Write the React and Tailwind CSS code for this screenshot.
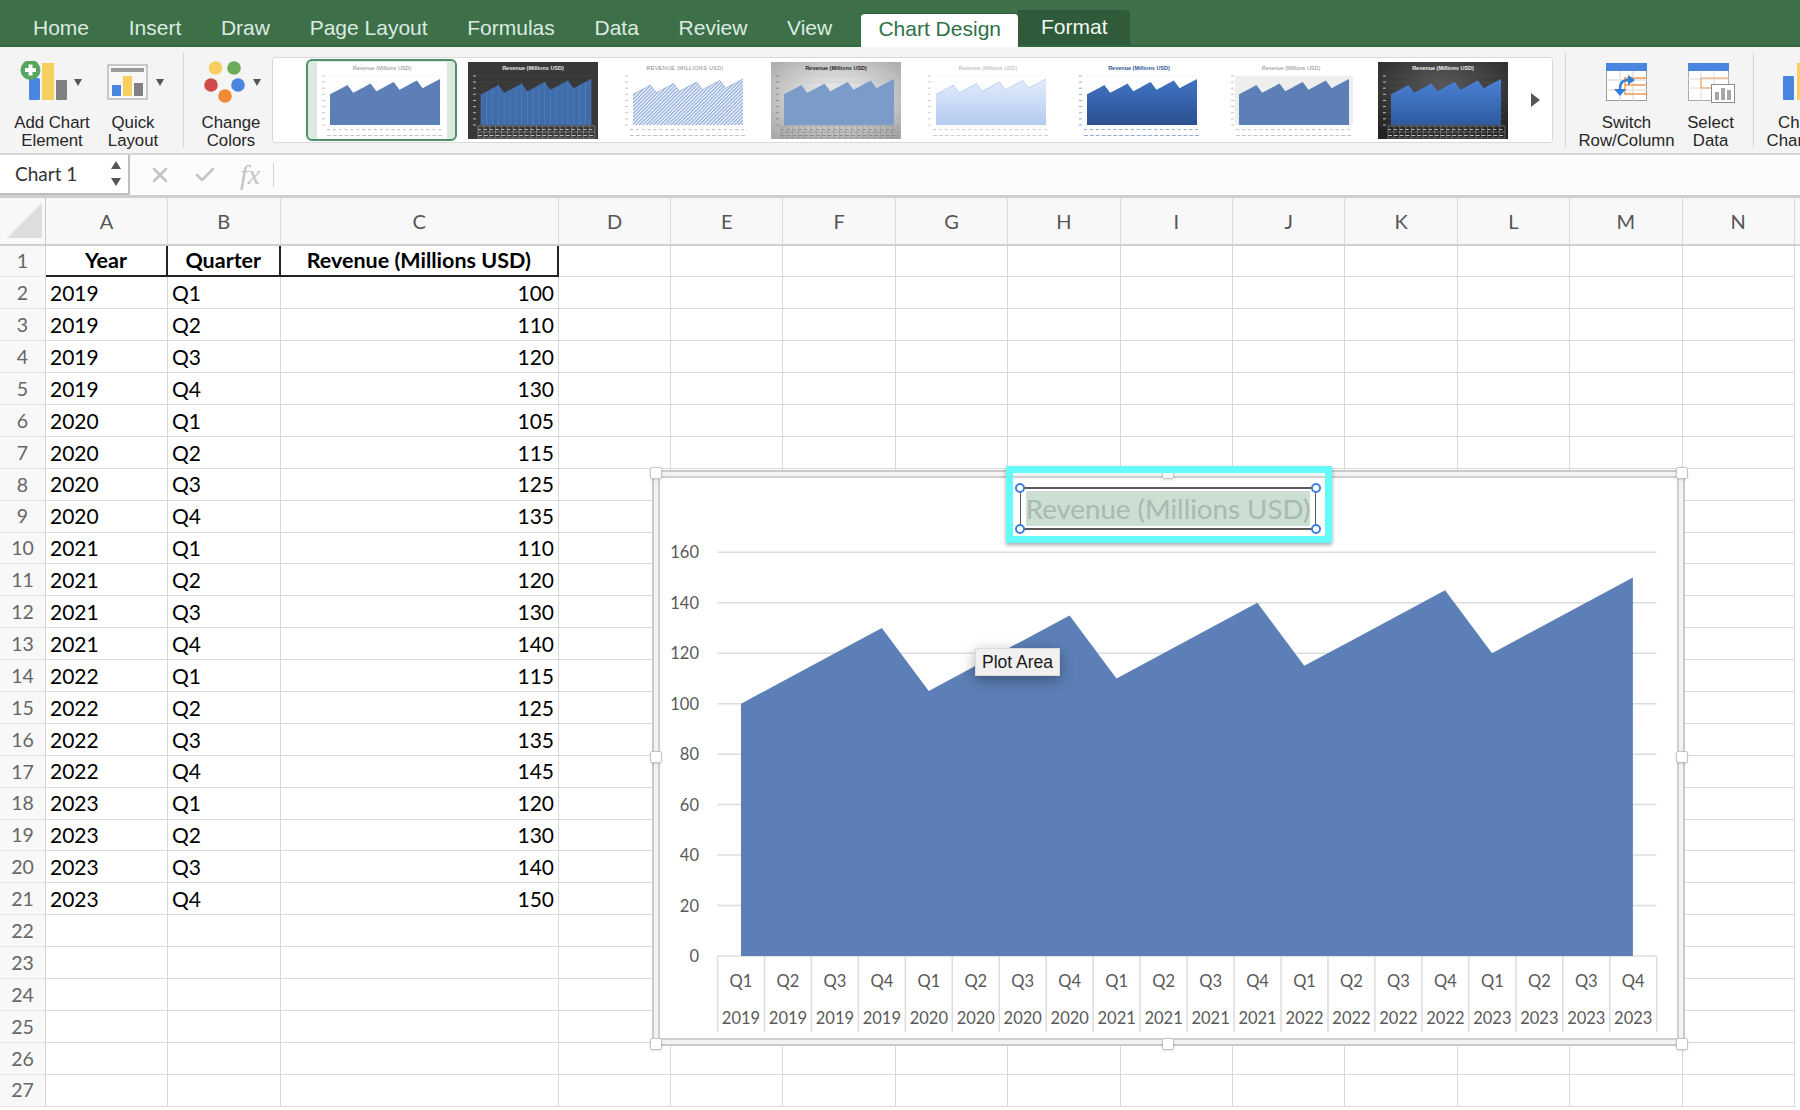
import { useId } from "react";
import { X, Check } from "lucide-react";

const values = [100, 110, 120, 130, 105, 115, 125, 135, 110, 120, 130, 140, 115, 125, 135, 145, 120, 130, 140, 150];
const quarters = ["Q1", "Q2", "Q3", "Q4"];
const years = [2019, 2020, 2021, 2022, 2023];

const rows = values.map((v, i) => ({
  year: years[Math.floor(i / 4)],
  quarter: quarters[i % 4],
  value: v,
}));

const letters = ["A", "B", "C", "D", "E", "F", "G", "H", "I", "J", "K", "L", "M", "N"];
const widths = [
  "w-[122px]", "w-[112.5px]", "w-[278.5px]", "w-[112px]", "w-[112.4px]", "w-[112.4px]", "w-[112.4px]",
  "w-[112.4px]", "w-[112.4px]", "w-[112.4px]", "w-[112.4px]", "w-[112.4px]", "w-[112.4px]", "w-[112.4px]",
];

function Tab({ children }) {
  return <span className="text-[#dcebe0]">{children}</span>;
}

function Caret({ className }) {
  return <span className={"absolute w-0 h-0 border-x-[4px] border-x-transparent border-t-[7px] border-t-[#555] " + className} />;
}

function RibbonBtn({ icon, label, label2, className }) {
  return (
    <div className={"relative flex flex-col items-center pt-[14px] shrink-0 " + className}>
      <div className="h-[53px] w-full">{icon}</div>
      <div className="text-center text-[16.8px] leading-[18px] text-[#262626] whitespace-nowrap">
        <div>{label}</div>
        <div>{label2}</div>
      </div>
    </div>
  );
}

function AddChartIcon() {
  return (
    <svg viewBox="10 61 84 52" width="84" height="52">
      <rect x="29" y="78" width="11" height="22" rx="1.5" fill="#4a86e0" />
      <rect x="42" y="63" width="12" height="37" fill="#f6cf5f" />
      <rect x="56" y="80" width="11" height="20" rx="1" fill="#808080" />
      <circle cx="30.5" cy="70" r="10" fill="#58a55f" />
      <path d="M28.500 64.500h4v3.500h3.500v4h-3.500v3.500h-4v-3.500h-3.500v-4h3.500z" fill="#fff" />
    </svg>
  );
}

function QuickLayoutIcon() {
  return (
    <svg viewBox="94 61 78 52" width="78" height="52">
      <rect x="108" y="65" width="39" height="34" fill="#f7f7f7" stroke="#9a9a9a" />
      <rect x="111" y="68" width="33" height="4" fill="#9b9b9b" />
      <rect x="112" y="85" width="9" height="11" fill="#4a86e0" />
      <rect x="123" y="76" width="9" height="20" fill="#f6cf5f" />
      <rect x="134" y="83" width="9" height="13" fill="#808080" />
    </svg>
  );
}

function ColorsIcon() {
  return (
    <svg viewBox="190 61 82 52" width="82" height="52">
      <circle cx="215.500" cy="68" r="6.800" fill="#f6cf5f" />
      <circle cx="234" cy="68" r="6.800" fill="#6cab5c" />
      <circle cx="211" cy="85" r="6.800" fill="#d14b4b" />
      <circle cx="238" cy="85" r="6.800" fill="#4a86e0" />
      <circle cx="225" cy="96" r="6.800" fill="#ef8b34" />
    </svg>
  );
}

function SwitchIcon() {
  return (
    <svg viewBox="1572 61 110 52" width="110" height="52">
      <rect x="1606.500" y="63.500" width="40" height="37" fill="#fff" stroke="#999" />
      <rect x="1606" y="63" width="41" height="8" fill="#4a86e0" />
      <path d="M1606 80h41M1606 90h41M1620 71v30M1633 71v30" stroke="#d4d4d4" fill="none" />
      <path d="M1624 78h23M1624 85h23M1624 94h23M1625 78v16" stroke="#ef9b55" fill="none" strokeWidth="1.300" />
      <path d="M1620 90c0-7 2-10 9-10" stroke="#2f7fd8" strokeWidth="2.500" fill="none" />
      <path d="M1628 75l7 5-7 5z M1614 89h12l-6 7z" fill="#2f7fd8" />
    </svg>
  );
}

function SelectIcon() {
  return (
    <svg viewBox="1682 61 58 52" width="58" height="52">
      <rect x="1688.500" y="63.500" width="40" height="37" fill="#fff" stroke="#aaa" />
      <rect x="1688" y="63" width="41" height="8" fill="#4a86e0" />
      <path d="M1688 79h41M1688 88h41M1701 71v30M1714 71v30" stroke="#dcdcdc" fill="none" />
      <path d="M1701 78h28M1701 88h12M1701 78v10" stroke="#ef9b55" fill="none" />
      <rect x="1711.500" y="84.500" width="23" height="18" fill="#fff" stroke="#8c8c8c" />
      <rect x="1715" y="92" width="4" height="8" fill="#a6a6a6" />
      <rect x="1721" y="88" width="4" height="12" fill="#a6a6a6" />
      <rect x="1727" y="90" width="4" height="10" fill="#a6a6a6" />
    </svg>
  );
}

function ChartTypeIcon() {
  return (
    <svg viewBox="1764 61 90 52" width="90" height="52">
      <rect x="1784" y="76" width="11" height="24" rx="1" fill="#4a86e0" />
      <rect x="1798" y="63" width="12" height="37" fill="#f6cf5f" />
    </svg>
  );
}

const thumbPoints = values.map((v, i) => `${13 + i * 5.79},${63 - v * 0.307}`).join(" ");
const thumbArea = `13,63 ${thumbPoints} ${13 + 19 * 5.79},63`;

const themes = {
  plain: { bg: "#ffffff", fill: "#5b7fb6", title: "#8a8a8a", tick: "#c4c4c4", grid: "#f0f0f0" },
  dark: { bg: "#383838", fill: "#3f6cab", title: "#e6e6e6", weight: 700, tick: "#bdbdbd", grid: "#4a4a4a", cells: "#cfcfcf", bars: true },
  hatch: { bg: "#ffffff", fill: "hatch", title: "#8a8a8a", tick: "#c4c4c4", grid: "#ffffff", upper: true, line: "#7d9fd4" },
  gray: { bg: "gray", fill: "#7b9cc9", title: "#262626", weight: 700, tick: "#8c8c8c", grid: "#c4c4c4", cells: "#7a7a7a" },
  soft: { bg: "#ffffff", fill: "soft", title: "#b0b0b0", tick: "#cfcfcf", grid: "#f2f2f2", line: "#a5bde8" },
  navy: { bg: "#ffffff", fill: "navy", title: "#2f5597", weight: 700, tick: "#8fadd9", grid: "#f2f2f2" },
  tint: { bg: "#ffffff", fill: "#5b7fb6", title: "#8a8a8a", tick: "#c4c4c4", grid: "#f0f0f0", plot: "#eeeeee" },
  night: { bg: "night", fill: "deep", title: "#f0f0f0", weight: 700, tick: "#bdbdbd", grid: "#555", cells: "#bdbdbd" },
};

function Thumb({ theme, className }) {
  const id = useId().replace(/:/g, "");
  const t = themes[theme];
  const fills = { hatch: `url(#h${id})`, soft: `url(#s${id})`, navy: `url(#n${id})`, deep: `url(#d${id})` };
  const bg = t.bg === "gray" ? `url(#g${id})` : t.bg === "night" ? `url(#r${id})` : t.bg;
  return (
    <svg viewBox="0 0 130 77" width="130" height="77" className={"shrink-0 " + (className || "")}>
      <defs>
        <pattern id={`h${id}`} width="2.500" height="2.500" patternUnits="userSpaceOnUse" patternTransform="rotate(45)">
          <rect width="2.500" height="2.500" fill="#ffffff" />
          <rect width="1.300" height="2.500" fill="#8aa8d8" />
        </pattern>
        <linearGradient id={`s${id}`} x1="0" y1="0" x2="0" y2="1">
          <stop offset="0" stopColor="#e3ecfb" />
          <stop offset="1" stopColor="#b4caf1" />
        </linearGradient>
        <linearGradient id={`n${id}`} x1="0" y1="0" x2="0" y2="1">
          <stop offset="0" stopColor="#4274c4" />
          <stop offset="1" stopColor="#2a508f" />
        </linearGradient>
        <linearGradient id={`d${id}`} x1="0" y1="0" x2="0" y2="1">
          <stop offset="0" stopColor="#4a82d8" />
          <stop offset="1" stopColor="#2f5a9e" />
        </linearGradient>
        <radialGradient id={`g${id}`} cx="0.500" cy="0.450" r="0.700">
          <stop offset="0" stopColor="#f5f5f5" />
          <stop offset="1" stopColor="#a8a8a8" />
        </radialGradient>
        <radialGradient id={`r${id}`} cx="0.500" cy="0.300" r="0.750">
          <stop offset="0" stopColor="#595959" />
          <stop offset="1" stopColor="#232323" />
        </radialGradient>
      </defs>
      <rect width="130" height="77" fill={bg} />
      {t.plot && <rect x="9" y="14" width="118" height="49" fill={t.plot} />}
      <text x="65" y="8" textAnchor="middle" fontSize="5.500" fontWeight={t.weight || 400} fill={t.title} fontFamily="'Liberation Sans', sans-serif" letterSpacing={t.upper ? "0.3" : "0"}>
        {t.upper ? "REVENUE (MILLIONS USD)" : "Revenue (Millions USD)"}
      </text>
      {[0, 1, 2, 3, 4, 5, 6, 7, 8].map((n) => (
        <g key={n}>
          <line x1="11" x2="126" y1={63 - n * 6.140} y2={63 - n * 6.140} stroke={t.grid} strokeWidth="0.500" />
          <line x1="5" x2="8" y1={63 - n * 6.140} y2={63 - n * 6.140} stroke={t.tick} strokeWidth="1" />
        </g>
      ))}
      <polygon points={thumbArea} fill={fills[t.fill] || t.fill} />
      {t.line && <polyline points={thumbPoints} fill="none" stroke={t.line} strokeWidth="0.600" />}
      {t.bars && values.map((v, i) => (
        <line key={i} x1={13 + i * 5.79} x2={13 + i * 5.79} y1={63 - v * 0.307} y2="63" stroke="#6d90c6" strokeWidth="0.400" />
      ))}
      {t.cells && (
        <g stroke={t.cells} strokeWidth="0.400" fill="none">
          <path d="M10 64h117M10 70h117M10 76h117" />
          {values.map((v, i) => (
            <line key={i} x1={10 + i * 5.85} x2={10 + i * 5.85} y1="64" y2="76" />
          ))}
          <line x1="127" x2="127" y1="64" y2="76" />
        </g>
      )}
      <line x1="10" x2="127" y1="67.500" y2="67.500" stroke={t.tick} strokeWidth="1.200" strokeDasharray="3 2.850" />
      <line x1="10" x2="127" y1="73.500" y2="73.500" stroke={t.tick} strokeWidth="1" strokeDasharray="4 1.850" />
    </svg>
  );
}

function Gallery() {
  return (
    <div className="flex items-center w-[1280.5px] h-[86px] mt-[10px] shrink-0 bg-white border border-[#d9d9d9] rounded-[3px]">
      <div className="ml-[33px] w-[151px] h-[82px] shrink-0 rounded-[6px] border-2 border-[#4f9068] bg-[#dbe9df] flex justify-center items-center">
        <Thumb theme="plain" />
      </div>
      <div className="flex gap-[21.6px] ml-[11px]">
        <Thumb theme="dark" />
        <Thumb theme="hatch" />
        <Thumb theme="gray" />
        <Thumb theme="soft" />
        <Thumb theme="navy" />
        <Thumb theme="tint" />
        <Thumb theme="night" />
      </div>
      <span className="ml-[23px] w-0 h-0 border-y-[7px] border-y-transparent border-l-[9px] border-l-[#555]" />
    </div>
  );
}

function Sep({ className }) {
  return <div className={"w-px h-[94px] mt-[6px] bg-[#d4d4d4] shrink-0 " + className} />;
}

function Ribbon() {
  return (
    <div className="flex h-[106px] bg-[#f4f4f4] shrink-0 overflow-hidden">
      <RibbonBtn className="w-[84px] ml-[10px]" icon={<AddChartIcon />} label="Add Chart" label2="Element" />
      <Caret className="left-[74px] top-[79px]" />
      <RibbonBtn className="w-[78px]" icon={<QuickLayoutIcon />} label="Quick" label2="Layout" />
      <Caret className="left-[156px] top-[79px]" />
      <Sep className="ml-[11px]" />
      <RibbonBtn className="w-[88px] pl-[6px]" icon={<ColorsIcon />} label="Change" label2="Colors" />
      <Caret className="left-[253px] top-[79px]" />
      <Gallery />
      <Sep className="ml-[12px]" />
      <RibbonBtn className="w-[110px] ml-[6px]" icon={<SwitchIcon />} label="Switch" label2="Row/Column" />
      <RibbonBtn className="w-[58px]" icon={<SelectIcon />} label="Select" label2="Data" />
      <Sep className="ml-[13px]" />
      <RibbonBtn className="w-[90px] ml-[9px]" icon={<ChartTypeIcon />} label="Change" label2="Chart Type" />
    </div>
  );
}

function FormulaBar() {
  return (
    <div className="flex h-[45px] shrink-0 bg-[#fcfcfc] border-t-2 border-[#d6d6d6] border-b-[3px] border-b-[#cfcfcf]">
      <div className="relative flex items-center w-[130px] bg-white border-r-2 border-b-2 border-[#bdbdbd] pl-[15px] text-[19px] text-[#333] font-['Lato',sans-serif]">
        Chart 1
        <span className="absolute left-[111px] top-[6px] w-0 h-0 border-x-[5px] border-x-transparent border-b-[8px] border-b-[#555]" />
        <span className="absolute left-[111px] top-[23px] w-0 h-0 border-x-[5px] border-x-transparent border-t-[8px] border-t-[#555]" />
      </div>
      <div className="flex items-center text-[#c4c4c4]">
        <X size={24} strokeWidth={2.5} className="ml-[18px]" />
        <Check size={24} strokeWidth={2.5} className="ml-[21px]" />
        <span className="ml-[23px] w-[26px] font-['Liberation_Serif',serif] italic text-[28px]">fx</span>
        <div className="w-px h-[24px] ml-[7px] bg-[#d4d4d4]" />
      </div>
    </div>
  );
}

function Sheet() {
  return (
    <div className="font-['Lato',sans-serif] text-black">
      <div className="flex h-[47.5px] bg-[#f8f8f8] border-b-2 border-[#cfcfcf]">
        <div className="flex items-center justify-end w-[46px] h-full border-r border-[#c9c9c9] pr-[3px] shrink-0">
          <div className="w-0 h-0 border-b-[35px] border-b-[#dedede] border-l-[35px] border-l-transparent" />
        </div>
        {letters.map((l, i) => (
          <div key={l} className={"flex items-center justify-center h-full shrink-0 border-r border-[#dcdcdc] text-[20px] text-[#555] " + widths[i]}>
            {l}
          </div>
        ))}
      </div>
      {Array.from({ length: 27 }).map((_, r) => {
        const row = r > 0 ? rows[r - 1] : null;
        return (
          <div key={r} className="flex h-[31.9px]">
            <div className="flex items-center justify-center w-[46px] shrink-0 bg-[#f8f8f8] border-r border-b border-[#d4d4d4] border-b-[#e6e6e6] text-[19.5px] text-[#666]">
              {r + 1}
            </div>
            {letters.map((l, c) => {
              if (r === 0 && c < 3) {
                return (
                  <div key={l} className={"flex items-center justify-center shrink-0 font-bold text-[21.5px] border-r-2 border-b-2 border-[#222] " + widths[c]}>
                    {["Year", "Quarter", "Revenue (Millions USD)"][c]}
                  </div>
                );
              }
              let text = "";
              if (row && c === 0) text = row.year;
              if (row && c === 1) text = row.quarter;
              if (row && c === 2) text = row.value;
              return (
                <div
                  key={l}
                  className={
                    "flex items-center shrink-0 text-[21px] border-r border-b border-[#d9d9d9] " +
                    (c === 2 ? "justify-end pr-[4px] " : "pl-[4px] ") +
                    widths[c]
                  }
                >
                  {text}
                </div>
              );
            })}
          </div>
        );
      })}
    </div>
  );
}

const chartPoints = values.map((v, i) => `${741 + i * 46.94},${956 - v * 2.523}`).join(" ");

function ChartSvg() {
  return (
    <svg viewBox="654 472 1029 572" className="absolute inset-0 w-full h-full" fontFamily="Lato, sans-serif">
      {[0, 20, 40, 60, 80, 100, 120, 140, 160].map((v) => (
        <g key={v}>
          <line x1="717.500" x2="1656.500" y1={956 - v * 2.523} y2={956 - v * 2.523} stroke="#dcdcdc" strokeWidth="1.500" />
          <text x="699" y={956 - v * 2.523 + 6} textAnchor="end" fontSize="16.500" fill="#595959">{v}</text>
        </g>
      ))}
      <polygon points={`741,956 ${chartPoints} 1632.900,956`} fill="#5b7fb6" />
      {Array.from({ length: 21 }).map((_, i) => (
        <line key={i} x1={717.5 + i * 46.96} x2={717.5 + i * 46.96} y1="956" y2="1032" stroke="#dcdcdc" strokeWidth="1.500" />
      ))}
      {rows.map((r, i) => (
        <g key={i} textAnchor="middle" fontSize="16.500" fill="#595959">
          <text x={741 + i * 46.96} y="987">{r.quarter}</text>
          <text x={741 + i * 46.96} y="1024">{r.year}</text>
        </g>
      ))}
    </svg>
  );
}

function SquareHandle({ className }) {
  return <span className={"absolute w-[12px] h-[12px] bg-white border border-[#c4c4c4] rounded-[2px] shadow-sm " + className} />;
}

function RoundHandle({ className }) {
  return <span className={"absolute w-[10px] h-[10px] rounded-full bg-white border-2 border-[#3f7fdc] " + className} />;
}

function Chart() {
  return (
    <div className="absolute left-[652px] top-[470px] w-[1033px] h-[576px] bg-[#f3f3f3] border-2 border-[#c9c9c9] p-[4px]">
      <div className="w-full h-full bg-white border-2 border-[#cfcfcf]" />
      <ChartSvg />
      <SquareHandle className="left-[-4.5px] top-[-5px]" />
      <SquareHandle className="left-[507.5px] top-[-5px]" />
      <SquareHandle className="right-[-5px] top-[-5px]" />
      <SquareHandle className="left-[-4.5px] top-[279px]" />
      <SquareHandle className="right-[-5px] top-[279px]" />
      <SquareHandle className="left-[-4.5px] bottom-[-6px]" />
      <SquareHandle className="left-[507.5px] bottom-[-6px]" />
      <SquareHandle className="right-[-5px] bottom-[-6px]" />
    </div>
  );
}

function TitleBox() {
  return (
    <div className="absolute left-[1006px] top-[466px] w-[326px] h-[77px] border-[7px] border-[#66fbfb] shadow-[0_2px_4px_rgba(0,0,0,0.35)] pl-[7px] pt-[14px]">
      <div className="relative flex items-center justify-center w-[296px] h-[43px] border-y-2 border-x border-[#5a5a5a]">
        <div className="flex items-center justify-center w-[284px] h-[35px] bg-[#cbdfd3] text-[#a9bab0] text-[27.7px] font-['Lato',sans-serif] whitespace-nowrap">
          Revenue (Millions USD)
        </div>
        <RoundHandle className="left-[-6px] top-[-6px]" />
        <RoundHandle className="right-[-6px] top-[-6px]" />
        <RoundHandle className="left-[-6px] bottom-[-6px]" />
        <RoundHandle className="right-[-6px] bottom-[-6px]" />
      </div>
    </div>
  );
}

export default function App() {
  return (
    <div className="relative flex flex-col w-[1800px] h-[1110px] overflow-hidden bg-white font-['Liberation_Sans',Arial,sans-serif]">
      <div className="flex items-end h-[47px] shrink-0 bg-[#3d7049] border-b-2 border-[#2f6b3f] text-[21px]">
        <div className="flex items-center gap-[39.7px] h-full pl-[33px] pt-[11px]">
          <Tab>Home</Tab>
          <Tab>Insert</Tab>
          <Tab>Draw</Tab>
          <Tab>Page Layout</Tab>
          <Tab>Formulas</Tab>
          <Tab>Data</Tab>
          <Tab>Review</Tab>
          <Tab>View</Tab>
        </div>
        <div className="flex items-center justify-center w-[157px] h-[34px] ml-[29px] mb-[-2px] pb-[3px] bg-white rounded-t-[4px] text-[#2f7048] border-t border-[#2b5a38]">
          Chart Design
        </div>
        <div className="flex items-center justify-center w-[112px] h-[35px] pb-[2px] bg-[#2f5b3a] rounded-tr-[4px] text-[#f2f7f3]">
          Format
        </div>
      </div>
      <Ribbon />
      <FormulaBar />
      <Sheet />
      <Chart />
      <TitleBox />
      <div className="absolute left-[975px] top-[648px] flex items-center justify-center w-[85px] h-[28px] bg-[#f0f0f0] border border-[#dcdcdc] text-[17.5px] text-[#1a1a1a] shadow-[0_4px_14px_rgba(0,0,0,0.35)]">
        Plot Area
      </div>
    </div>
  );
}
